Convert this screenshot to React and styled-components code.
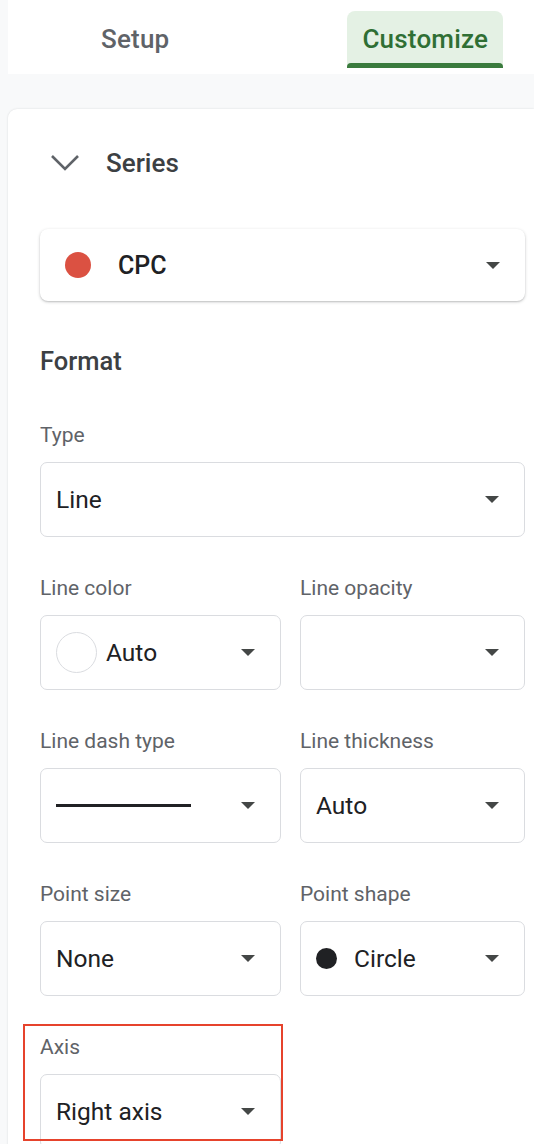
import React from "react";
import styled, { createGlobalStyle } from "styled-components";

const Global = createGlobalStyle`
  html, body { margin: 0; padding: 0; background: #f8f9fa; }
  body { font-family: Roboto, "Noto Sans", "Liberation Sans", sans-serif; }
  * { box-sizing: border-box; }
`;

const Page = styled.div`
  width: 534px;
  height: 1144px;
  overflow: hidden;
  display: flex;
  background: #f8f9fa;
`;

const Gutter = styled.div`
  width: 8px;
  flex: none;
`;

const Panel = styled.div`
  flex: 1;
  display: flex;
  flex-direction: column;
  min-width: 0;
`;

const Tabs = styled.div`
  height: 74px;
  background: #fff;
  display: flex;
  align-items: flex-start;
  padding-top: 11px;
  flex: none;
`;

const Tab = styled.div`
  height: 57px;
  margin-left: ${(p) => p.$offset}px;
  padding: 0 15px;
  display: flex;
  align-items: center;
  padding-bottom: 2px;
  font-size: 26px;
  font-weight: 500;
  letter-spacing: 0.2px;
  color: ${(p) => (p.$active ? "#2f6f34" : "#5f6368")};
  background: ${(p) => (p.$active ? "#e4f1e4" : "transparent")};
  border-radius: 8px 8px 0 0;
  position: relative;
  &::after {
    content: "";
    display: ${(p) => (p.$active ? "block" : "none")};
    position: absolute;
    left: 0;
    right: 0;
    bottom: 0;
    height: 5px;
    background: #3a7b3d;
    border-radius: 4px 4px 0 0;
  }
`;

const Band = styled.div`
  height: 35px;
  flex: none;
`;

const Card = styled.div`
  flex: 1;
  background: #fff;
  border-top-left-radius: 9px;
  box-shadow: 0 0 2px rgba(60, 64, 67, 0.18);
  padding: 38px 9px 0 32px;
`;

const SectionHeader = styled.div`
  display: flex;
  align-items: center;
  height: 32px;
  gap: 26px;
  padding-left: 10px;
  font-size: 26px;
  font-weight: 500;
  color: #3c4043;
`;

const SeriesSelect = styled.div`
  margin-top: 50px;
  height: 72px;
  border-radius: 8px;
  background: #fff;
  box-shadow: 0 1px 3px rgba(60, 64, 67, 0.3), 0 1px 1px rgba(60, 64, 67, 0.08);
  display: flex;
  align-items: center;
  padding: 0 25px 0 25px;
  gap: 27px;
  font-size: 25px;
  font-weight: 500;
  color: #202124;
`;

const Dot = styled.span`
  flex: none;
  width: ${(p) => p.$size}px;
  height: ${(p) => p.$size}px;
  border-radius: 50%;
  background: ${(p) => p.$color};
  border: ${(p) => (p.$outline ? "1px solid #dadce0" : "none")};
`;

const Title = styled.div`
  margin-top: 44px;
  margin-bottom: 44px;
  height: 32px;
  line-height: 32px;
  font-size: 25.5px;
  font-weight: 500;
  color: #3c4043;
`;

const Grid = styled.div`
  display: grid;
  grid-template-columns: 241px 225px;
  column-gap: 19px;
  row-gap: 37px;
`;

const Field = styled.div`
  grid-column: ${(p) => (p.$full ? "1 / -1" : "auto")};
  position: relative;
`;

const Label = styled.div`
  height: 28px;
  line-height: 28px;
  margin-bottom: 13px;
  font-size: 21px;
  color: #5f6368;
`;

const Select = styled.div`
  height: 75px;
  border: 1px solid #dadce0;
  border-radius: 7px;
  display: flex;
  align-items: center;
  padding: 0 25px 0 15px;
  gap: ${(p) => p.$gap || 0}px;
  font-size: 24.5px;
  color: #202124;
`;

const Value = styled.span`
  flex: 1;
  white-space: nowrap;
`;

const Dash = styled.span`
  width: 135px;
  height: 3px;
  background: #202124;
  flex: none;
  margin-right: auto;
`;

const Caret = styled.span`
  flex: none;
  width: 0;
  height: 0;
  border-left: 7px solid transparent;
  border-right: 7px solid transparent;
  border-top: 7px solid #444746;
  margin-left: auto;
`;

const Highlight = styled.div`
  position: absolute;
  left: -17px;
  top: -9px;
  width: 260px;
  height: 117px;
  border: 2px solid #e6432c;
  pointer-events: none;
`;

function Chevron() {
  return (
    <svg width="30" height="18" viewBox="0 0 30 18" fill="none">
      <path d="M2 2 L15 15 L28 2" stroke="#5f6368" strokeWidth="2.6" />
    </svg>
  );
}

function Dropdown({ children, gap }) {
  return (
    <Select $gap={gap}>
      {children}
      <Caret />
    </Select>
  );
}

export default function App() {
  return (
    <>
      <Global />
      <Page>
        <Gutter />
        <Panel>
          <Tabs>
            <Tab $offset={78}>Setup</Tab>
            <Tab $offset={163} $active>
              Customize
            </Tab>
          </Tabs>
          <Band />
          <Card>
            <SectionHeader>
              <Chevron />
              <span>Series</span>
            </SectionHeader>
            <SeriesSelect>
              <Dot $size={26} $color="#db5142" />
              <Value>CPC</Value>
              <Caret />
            </SeriesSelect>
            <Title>Format</Title>
            <Grid>
              <Field $full>
                <Label>Type</Label>
                <Dropdown>
                  <Value>Line</Value>
                </Dropdown>
              </Field>
              <Field>
                <Label>Line color</Label>
                <Dropdown gap={9}>
                  <Dot $size={41} $color="#fff" $outline />
                  <Value>Auto</Value>
                </Dropdown>
              </Field>
              <Field>
                <Label>Line opacity</Label>
                <Dropdown>
                  <Value />
                </Dropdown>
              </Field>
              <Field>
                <Label>Line dash type</Label>
                <Dropdown>
                  <Dash />
                </Dropdown>
              </Field>
              <Field>
                <Label>Line thickness</Label>
                <Dropdown>
                  <Value>Auto</Value>
                </Dropdown>
              </Field>
              <Field>
                <Label>Point size</Label>
                <Dropdown>
                  <Value>None</Value>
                </Dropdown>
              </Field>
              <Field>
                <Label>Point shape</Label>
                <Dropdown gap={17}>
                  <Dot $size={21} $color="#202124" />
                  <Value>Circle</Value>
                </Dropdown>
              </Field>
              <Field>
                <Label>Axis</Label>
                <Dropdown>
                  <Value>Right axis</Value>
                </Dropdown>
                <Highlight />
              </Field>
            </Grid>
          </Card>
        </Panel>
      </Page>
    </>
  );
}
